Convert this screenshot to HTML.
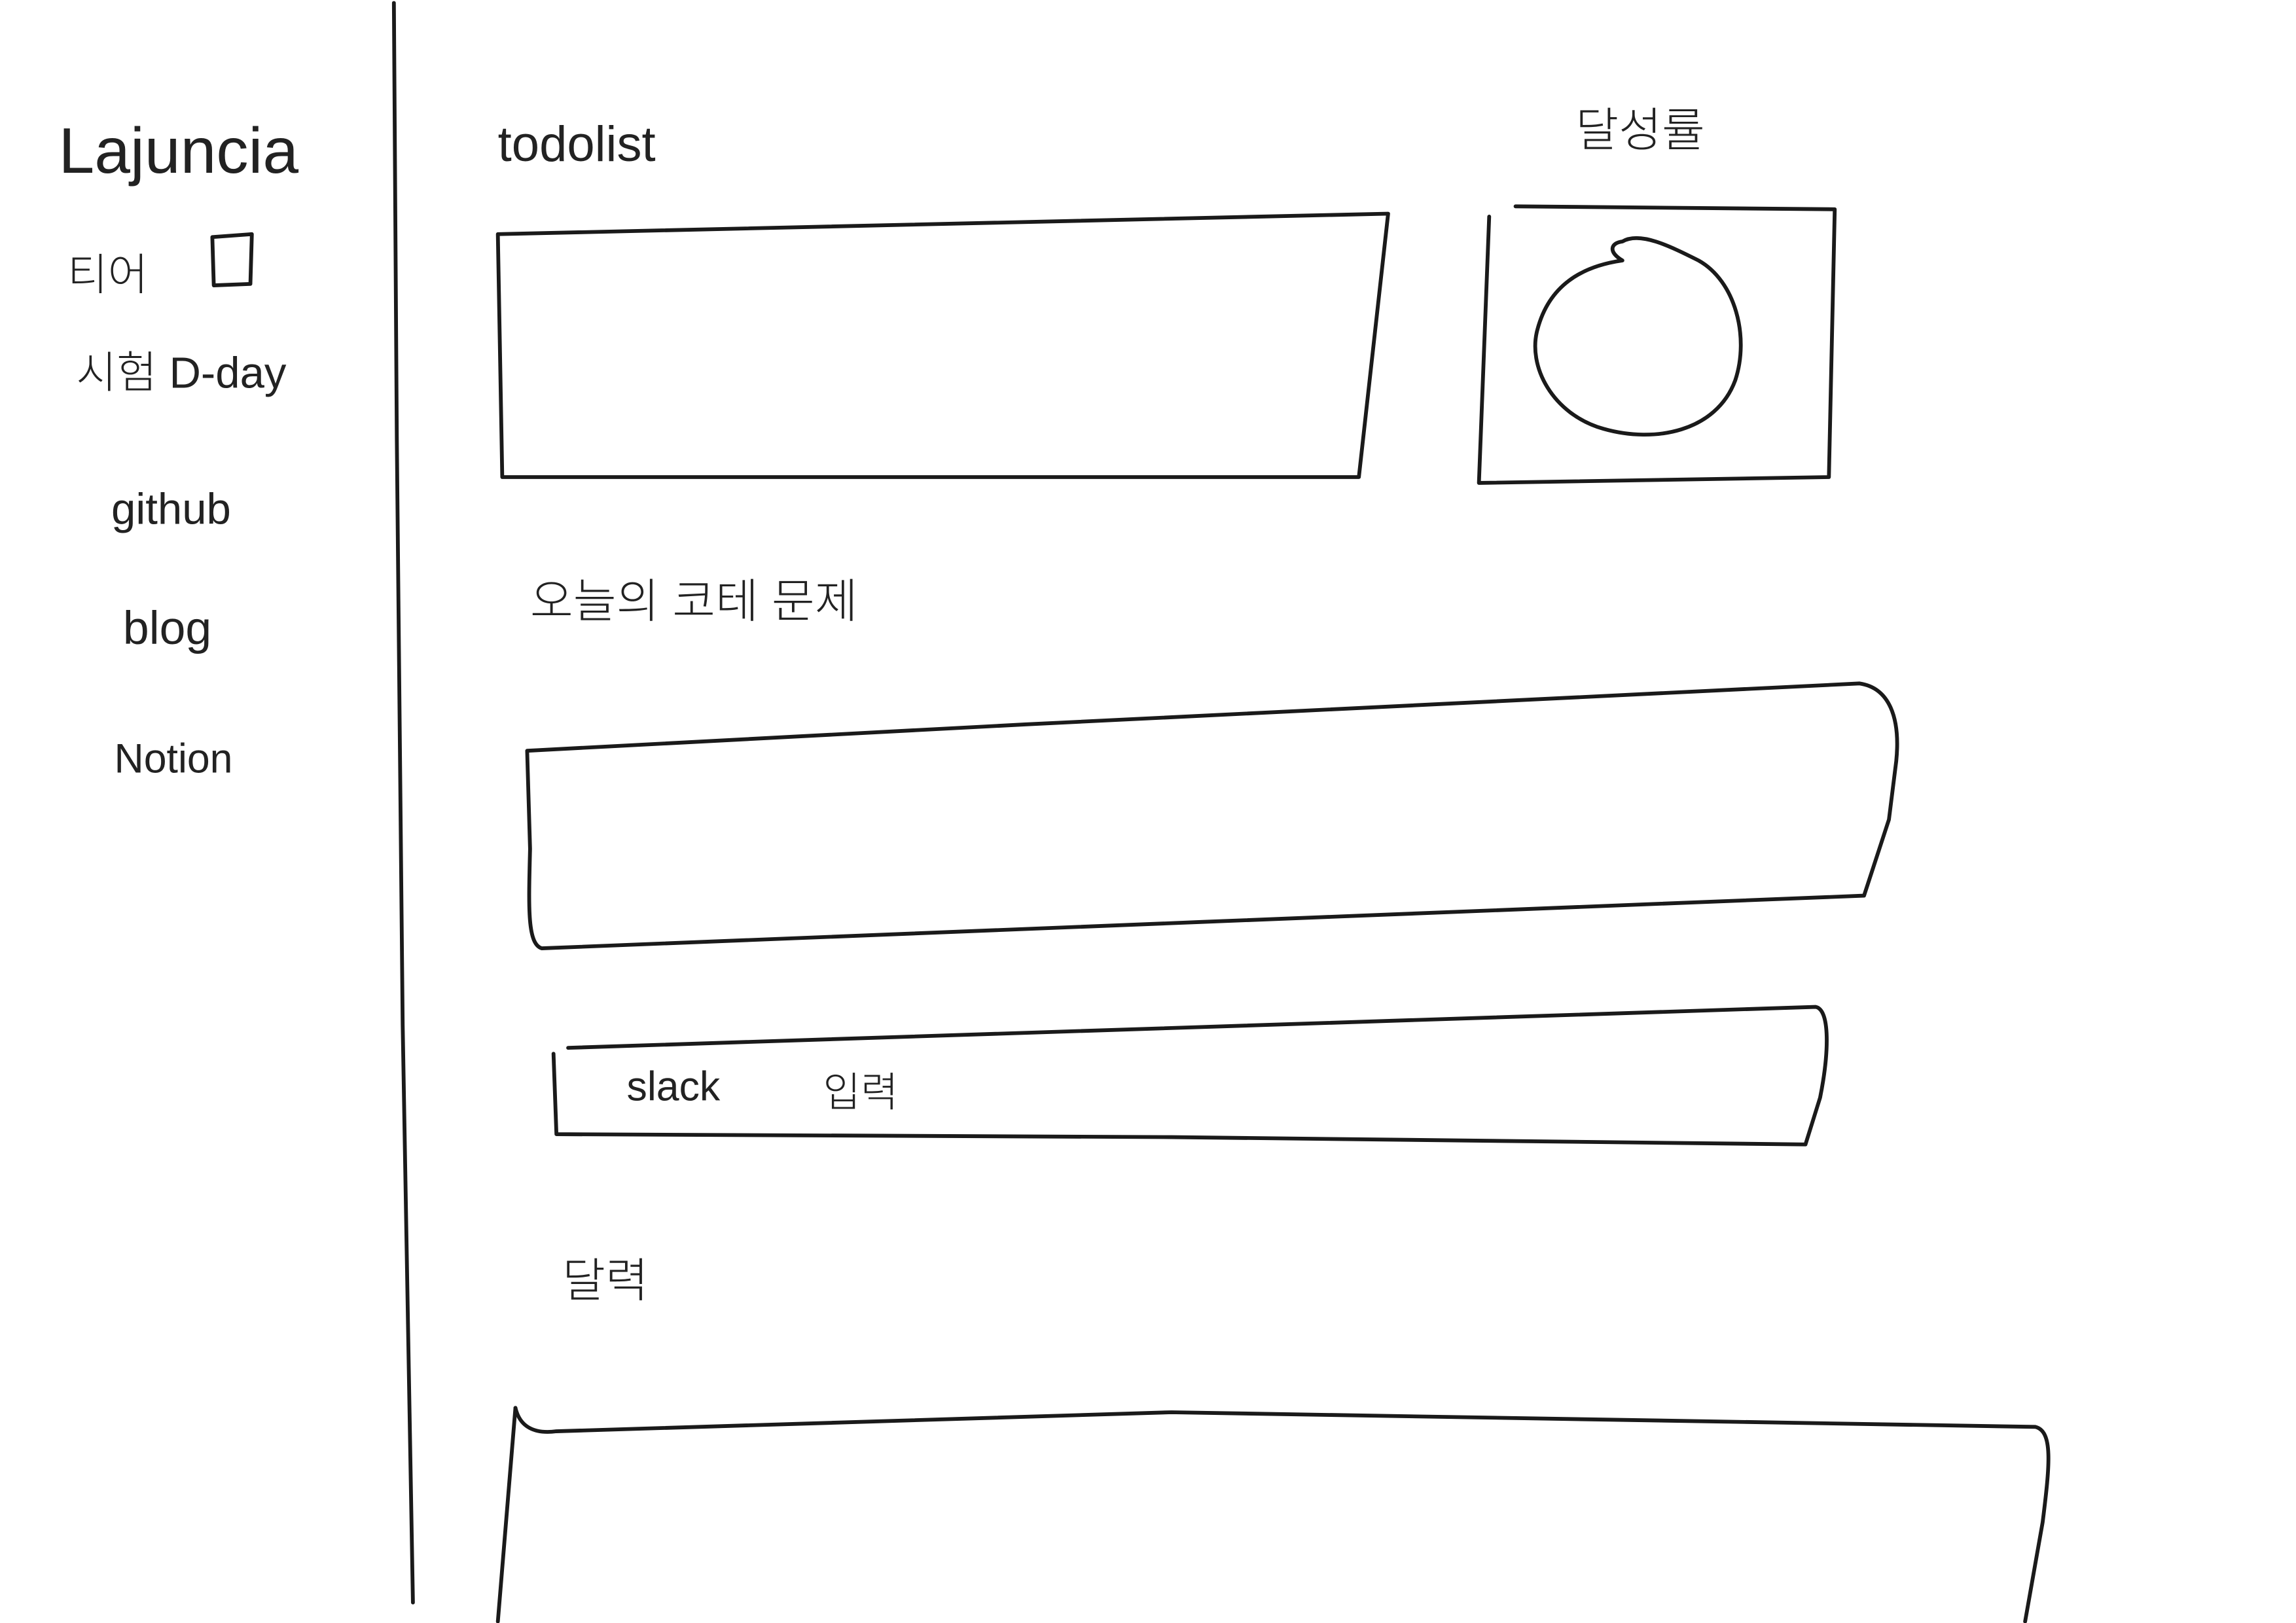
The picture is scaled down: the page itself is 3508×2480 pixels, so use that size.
<!DOCTYPE html>
<html><head><meta charset="utf-8"><style>
html,body{margin:0;padding:0;background:#fff;}
svg{display:block;}
text{font-family:"Liberation Sans","Noto Sans CJK KR",sans-serif;fill:#222;font-weight:300;}
</style></head><body>
<svg width="3508" height="2480" viewBox="0 0 1568 1109" preserveAspectRatio="none" xmlns="http://www.w3.org/2000/svg">
<rect width="1568" height="1109" fill="#fff"/>
<g fill="none" stroke="#1a1a1a" stroke-width="2.6" stroke-linecap="round" stroke-linejoin="round">
<!-- sidebar divider -->
<path d="M269 2 L271 300 L275 700 L282 1095"/>
<!-- tier box -->
<path d="M145 162 L172 160 L171 194 L146 195 Z"/>
<!-- todolist box -->
<path d="M340 160 L948 146 L928 326 L343 326 Z"/>
<!-- achievement box -->
<path d="M1035 141 L1253 143 L1249 326 L1010 330 L1017 148"/>
<path d="M1108 165 C1120 158 1140 168 1160 178 C1185 192 1195 230 1185 260 C1172 295 1130 303 1095 293 C1060 283 1043 250 1050 225 C1058 195 1080 182 1108 178 C1098 172 1100 166 1108 165"/>
<!-- coding test box -->
<path d="M360 513 L700 495 L1270 467 C1290 470 1298 490 1295 520 L1290 560 L1273 612 L820 630 L370 648 C360 645 361 620 362 580 Z"/>
<!-- slack box -->
<path d="M388 716 L1240 688 C1250 690 1249 720 1243 750 L1233 782 L800 777 L380 775 L378 720"/>
<!-- calendar box -->
<path d="M352 962 C355 975 365 980 380 978 L800 965 L1390 975 C1402 978 1400 1000 1395 1040 L1383 1108"/>
<path d="M352 962 L340 1108"/>
</g>
<text x="40" y="118" font-size="44" transform="scale(1,1)">Lajuncia</text>
<text x="46" y="198" font-size="30">티어</text>
<text x="52" y="265" font-size="30">시험 D-day</text>
<text x="76" y="358" font-size="30">github</text>
<text x="84" y="440" font-size="32">blog</text>
<text x="78" y="528" font-size="28">Notion</text>
<text x="340" y="110" font-size="34">todolist</text>
<text x="1076" y="100" font-size="32">달성률</text>
<text x="362" y="422" font-size="32">오늘의 코테 문제</text>
<text x="428" y="752" font-size="28">slack</text>
<text x="562" y="756" font-size="28">입력</text>
<text x="384" y="886" font-size="32">달력</text>
</svg>
</body></html>
